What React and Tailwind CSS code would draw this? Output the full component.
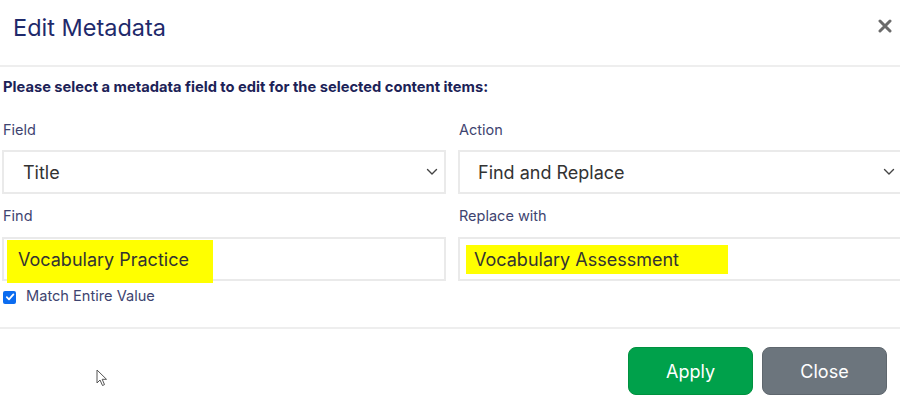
import React from "react";

function Chevron({ className }) {
  return (
    <svg className={className} width="12" height="8" viewBox="0 0 12 8" fill="none">
      <path d="M1.5 1.5 L6 6 L10.5 1.5" stroke="#444" strokeWidth="1.4" strokeLinecap="round" strokeLinejoin="round" />
    </svg>
  );
}

export default function App() {
  return (
    <div
      className="w-[900px] h-[407px] bg-white overflow-hidden relative"
      style={{ fontFamily: "Inter, 'Noto Sans', sans-serif" }}
    >
      <div className="h-[65px] flex items-start justify-between pl-[13px] pr-[8px] pt-[12px]">
        <h1 className="text-[23.5px] leading-[32px] text-[#1f2a6b] font-normal">Edit Metadata</h1>
        <svg className="mt-[7px]" width="14" height="14" viewBox="0 0 14 14">
          <path d="M2 2 L12 12 M12 2 L2 12" stroke="#6b6b6b" strokeWidth="3" strokeLinecap="round" />
        </svg>
      </div>
      <div className="border-t-2 border-[#eeeeee]" />
      <div className="pl-[2px] pt-[10px]">
        <p className="text-[14.7px] leading-[20px] font-bold text-[#1c2257] pl-[1px]">
          Please select a metadata field to edit for the selected content items:
        </p>
        <div className="grid grid-cols-[444px_446px] gap-x-[12px] mt-[23px]">
          <div>
            <div className="text-[14.5px] leading-[20px] text-[#3e4470] pl-[1px]">Field</div>
            <div className="mt-[10px] h-[44px] border-2 border-[#eaeaea] flex items-center justify-between pl-[19px] pr-[6px]">
              <span className="text-[18px] text-[#333333]">Title</span>
              <Chevron />
            </div>
          </div>
          <div>
            <div className="text-[14.5px] leading-[20px] text-[#3e4470] pl-[1px]">Action</div>
            <div className="mt-[10px] h-[44px] border-2 border-r-0 border-[#eaeaea] flex items-center justify-between pl-[18px] pr-[9px]">
              <span className="text-[18px] text-[#333333]">Find and Replace</span>
              <Chevron />
            </div>
          </div>
          <div className="mt-[12px]">
            <div className="text-[14.5px] leading-[20px] text-[#3e4470] pl-[1px]">Find</div>
            <div className="relative mt-[11px] h-[44px] border-2 border-[#eaeaea] flex items-center pl-[14px]">
              <span className="absolute left-[3px] top-[1px] w-[206px] h-[43px] bg-[#ffff00]" />
              <span className="relative text-[18px] text-[#333333]">Vocabulary Practice</span>
            </div>
          </div>
          <div className="mt-[12px]">
            <div className="text-[14.5px] leading-[20px] text-[#3e4470] pl-[1px]">Replace with</div>
            <div className="relative mt-[11px] h-[44px] border-2 border-r-0 border-[#eaeaea] flex items-center pl-[14px]">
              <span className="absolute left-[6px] top-[6px] w-[262px] h-[29px] bg-[#ffff00]" />
              <span className="relative text-[18px] text-[#333333]">Vocabulary Assessment</span>
            </div>
          </div>
        </div>
        <label className="flex items-center gap-[10px] h-[20px] mt-[6px] pl-[1px]">
          <span className="w-[13px] h-[13px] rounded-[2px] bg-[#0b6cf0] flex items-center justify-center">
            <svg width="10" height="10" viewBox="0 0 10 10">
              <path d="M1.8 5.2 L4 7.4 L8.4 2.4" stroke="white" strokeWidth="1.8" fill="none" strokeLinecap="round" strokeLinejoin="round" />
            </svg>
          </span>
          <span className="text-[14.6px] text-[#3e4470]">Match Entire Value</span>
        </label>
      </div>
      <div className="mt-[20px] border-t-2 border-[#eeeeee]" />
      <div className="flex justify-end gap-[9px] pr-[13px] pt-[18px]">
        <button className="w-[125px] h-[48px] rounded-[8px] bg-[#00a14b] text-white text-[18px] border border-[#00913f]">
          Apply
        </button>
        <button className="w-[125px] h-[48px] rounded-[8px] bg-[#6c757d] text-white text-[18px] border border-[#5f676e]">
          Close
        </button>
      </div>
      <svg className="absolute left-[96px] top-[369px]" width="14" height="18" viewBox="0 0 14 18">
        <path d="M1 1 L1 14 L4 11 L6.5 16.5 L8.5 15.6 L6.2 10.3 L10.5 10.3 Z" fill="white" stroke="#555" strokeWidth="1" strokeLinejoin="round" />
      </svg>
    </div>
  );
}
